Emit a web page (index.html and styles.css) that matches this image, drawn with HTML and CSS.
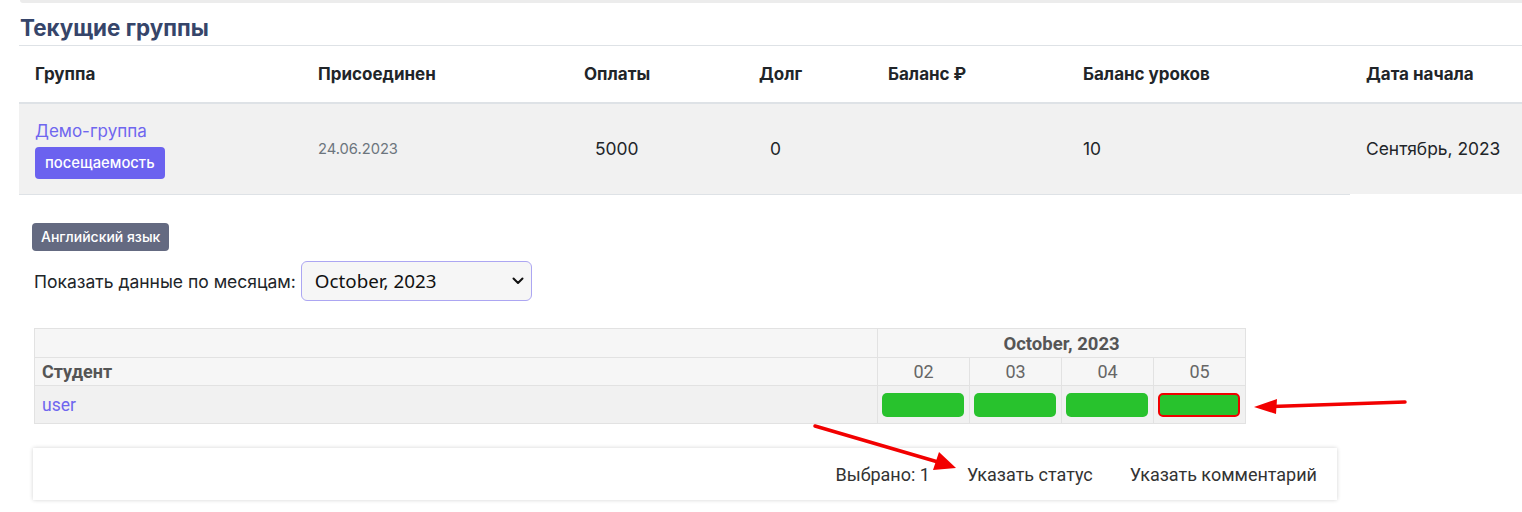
FILE: index.html
```html
<!DOCTYPE html>
<html lang="ru">
<head>
<meta charset="utf-8">
<title>Текущие группы</title>
<link rel="stylesheet" href="styles.css">
</head>
<body>
<div class="page">
  <div class="top-strip"></div>
  <h2 class="title">Текущие группы</h2>
  <div class="groups-wrap">
    <table class="groups">
      <colgroup>
        <col class="c1"><col class="c2"><col class="c3"><col class="c4"><col class="c5"><col class="c6"><col class="c7">
      </colgroup>
      <thead>
        <tr>
          <th>Группа</th>
          <th>Присоединен</th>
          <th>Оплаты</th>
          <th>Долг</th>
          <th>Баланс ₽</th>
          <th>Баланс уроков</th>
          <th>Дата начала</th>
        </tr>
      </thead>
      <tbody>
        <tr>
          <td>
            <a class="group-link" href="#">Демо-группа</a>
            <div><span class="btn-attend">посещаемость</span></div>
          </td>
          <td class="date">24.06.2023</td>
          <td class="num">5000</td>
          <td class="num">0</td>
          <td></td>
          <td>10</td>
          <td class="last">Сентябрь, 2023</td>
        </tr>
      </tbody>
    </table>
  </div>

  <div class="section">
    <span class="subject">Английский язык</span>
    <div class="filter">
      <span class="filter-label">Показать данные по месяцам:</span>
      <div class="select">
        <span>October, 2023</span>
        <svg class="chev" width="12" height="8" viewBox="0 0 12 8"><path d="M1.5 1.5 L6 6 L10.5 1.5" fill="none" stroke="#111" stroke-width="2" stroke-linecap="round" stroke-linejoin="round"/></svg>
      </div>
    </div>

    <table class="attend">
      <tr class="r-month">
        <td class="blank"></td>
        <td colspan="4" class="month">October, 2023</td>
      </tr>
      <tr class="r-days">
        <td class="student-h">Студент</td>
        <td class="day">02</td>
        <td class="day">03</td>
        <td class="day">04</td>
        <td class="day">05</td>
      </tr>
      <tr class="r-user">
        <td class="user"><a href="#">user</a></td>
        <td class="mark"><span class="ok"></span></td>
        <td class="mark"><span class="ok"></span></td>
        <td class="mark"><span class="ok"></span></td>
        <td class="mark"><span class="ok sel"></span></td>
      </tr>
    </table>

    <div class="actions">
      <span>Выбрано: 1</span>
      <span>Указать статус</span>
      <span>Указать комментарий</span>
    </div>
  </div>

  <svg class="annot" width="1522" height="512" viewBox="0 0 1522 512">
    <line x1="1405" y1="402" x2="1272" y2="406.5" stroke="#f20000" stroke-width="3.5" stroke-linecap="round"/>
    <polygon points="1254,407 1277,399 1276,414" fill="#f20000"/>
    <line x1="815" y1="426" x2="938" y2="462" stroke="#f20000" stroke-width="3.5" stroke-linecap="round"/>
    <polygon points="956,468 933,470 939,452" fill="#f20000"/>
  </svg>
</div>
</body>
</html>
```

FILE: styles.css
```css
* { box-sizing: border-box; }
html, body { margin: 0; padding: 0; background: #fff; }
body {
  font-family: Inter, "Noto Sans", sans-serif;
  color: #212529;
  width: 1522px;
  height: 512px;
  overflow: hidden;
}
.page { position: relative; padding-left: 19px; }

.top-strip {
  height: 3px;
  margin-left: 1px;
  background: #ececec;
  border-bottom-left-radius: 6px;
}

.title {
  margin: 10px 0 0 1px;
  height: 32px;
  font-size: 22.4px;
  font-weight: 700;
  line-height: 30px;
  color: #36456a;
}

.groups-wrap { width: 1503px; overflow: hidden; }
.groups {
  border-collapse: collapse;
  table-layout: fixed;
  width: 1540px;
  border-top: 1px solid #dee2e6;
}
.groups .c1 { width: 283px; }
.groups .c2 { width: 266px; }
.groups .c3 { width: 175px; }
.groups .c4 { width: 129px; }
.groups .c5 { width: 195px; }
.groups .c6 { width: 283px; }
.groups .c7 { width: 209px; }

.groups th {
  text-align: left;
  font-size: 17px;
  font-weight: 700;
  height: 57px;
  padding: 0 16px;
  border-bottom: 2px solid #dee2e6;
  vertical-align: middle;
  white-space: nowrap;
}
.groups td {
  background: #f1f1f1;
  height: 92px;
  padding: 0 16px;
  font-size: 17.4px;
  vertical-align: middle;
  border-bottom: 1px solid #dee2e6;
  white-space: nowrap;
}
.groups td.last { border-bottom: 1px solid #fff; }
.groups td.date { font-size: 14.7px; color: #6c757d; }
.groups td.num { padding-left: 27px; }

.group-link {
  display: inline-block;
  color: #6f66ef;
  text-decoration: none;
  font-size: 17px;
  line-height: 22px;
  margin-top: 1px;
}
.btn-attend {
  display: inline-block;
  margin-top: 5px;
  background: #6b62ef;
  color: #fff;
  font-size: 14.8px;
  font-weight: 500;
  line-height: 32px;
  height: 32px;
  padding: 0 10px;
  border-radius: 4px;
}

.section { padding-left: 15px; }

.subject {
  display: inline-block;
  margin-top: 28px;
  margin-left: -2px;
  background: #646a81;
  color: #fff;
  font-size: 14px;
  font-weight: 500;
  height: 28px;
  line-height: 28px;
  padding: 0 9px;
  border-radius: 4px;
}

.filter {
  display: flex;
  align-items: center;
  gap: 5px;
  margin-top: 10px;
}
.filter-label { font-size: 17.5px; color: #212529; }
.select {
  display: flex;
  align-items: center;
  justify-content: space-between;
  width: 231px;
  height: 40px;
  padding: 0 7px 0 13px;
  border: 1px solid #aca6f2;
  border-radius: 6px;
  background: #f6f6f6;
  font-family: "Noto Sans", sans-serif;
  font-size: 18.8px;
  color: #111;
}

.attend {
  margin-top: 27px;
  border-collapse: collapse;
  font-family: Roboto, sans-serif;
  font-size: 17.5px;
  color: #555;
}
.attend td { border: 1px solid #e2e2e2; padding: 0; }
.attend td.blank { width: 843px; }
.attend .r-month td { background: #f6f6f6; height: 29px; }
.attend .month { text-align: center; font-weight: 700; color: #555; padding-top: 1px; font-size: 18.5px; }
.attend .r-days td { background: #f6f6f6; height: 28px; }
.attend .student-h { font-weight: 700; padding-left: 7px; color: #555; font-size: 18px; }
.attend .day { width: 92px; text-align: center; color: #666; font-weight: 400; font-size: 18px; }
.attend .r-user td { background: #f1f1f1; height: 38px; }
.attend .user { padding-left: 7px; }
.attend .user a { color: #6f66ef; text-decoration: none; }
.attend .mark { text-align: center; }
.ok {
  display: block;
  margin: 0 5px 0 4px;
  height: 24px;
  border-radius: 5px;
  background: #28c22d;
}
.ok.sel { border: 2px solid #f00000; }

.actions {
  display: flex;
  justify-content: flex-end;
  align-items: center;
  gap: 37px;
  width: 1304px;
  height: 52px;
  margin-top: 24px;
  margin-left: -1px;
  padding-right: 20px;
  background: #fff;
  box-shadow: 0 0 4px rgba(0,0,0,0.18);
  font-family: Roboto, sans-serif;
  font-size: 18px;
  color: #333;
}

.annot { position: absolute; left: 0; top: 0; pointer-events: none; }
```
